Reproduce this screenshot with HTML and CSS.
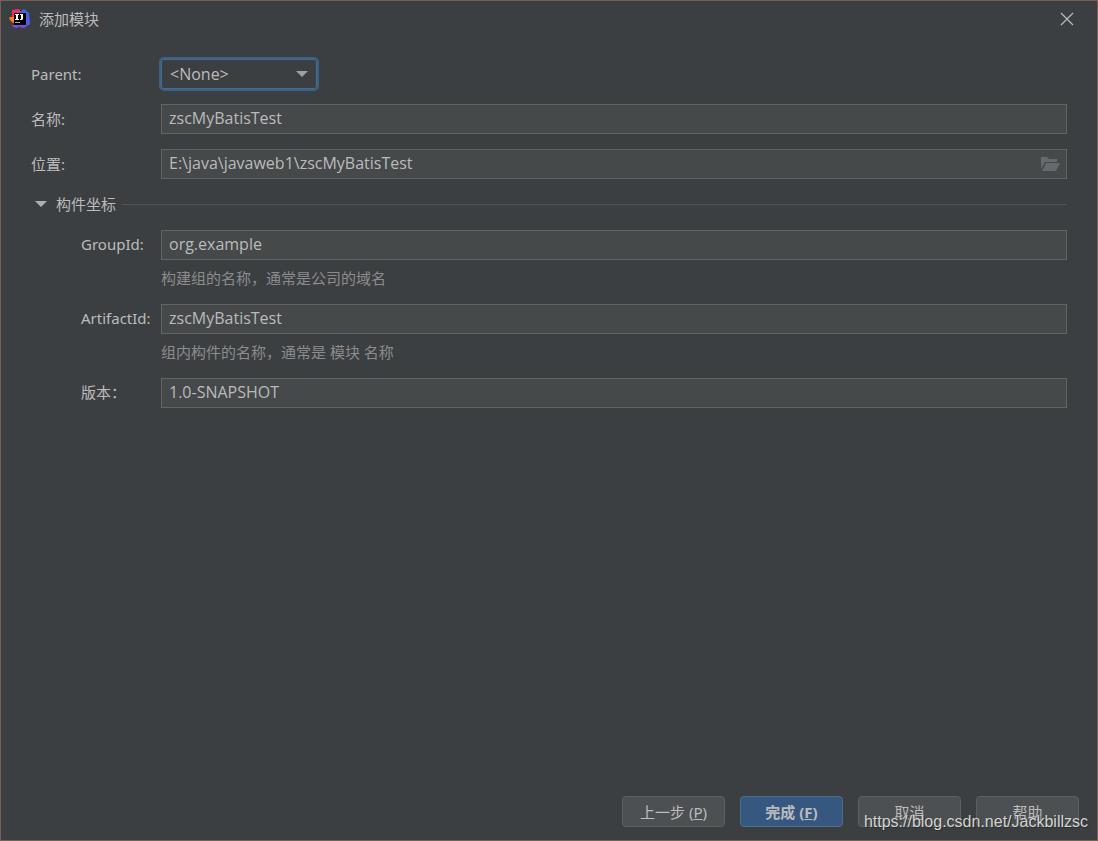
FILE: index.html
```html
<!DOCTYPE html>
<html lang="zh-CN">
<head>
<meta charset="utf-8">
<meta name="viewport" content="width=device-width, initial-scale=1">
<title>添加模块</title>
<link rel="stylesheet" href="styles.css">
</head>
<body>
<div class="dialog">
  <header class="titlebar">
    <svg class="logo" width="22" height="22" viewBox="0 0 22 22" aria-hidden="true">
      <defs>
        <linearGradient id="warm" x1="0" y1="1" x2="1" y2="0">
          <stop offset="0" stop-color="#fc801d"/>
          <stop offset=".4" stop-color="#fe2857"/>
          <stop offset="1" stop-color="#c93a9b"/>
        </linearGradient>
        <linearGradient id="cool" x1="0" y1="1" x2="1" y2="0">
          <stop offset="0" stop-color="#8a45e0"/>
          <stop offset="1" stop-color="#2b6bf0"/>
        </linearGradient>
      </defs>
      <path fill="url(#cool)" d="M11 4 15 1 20 5 21 16 15 20 6 18z"/>
      <path fill="url(#warm)" d="M3 2 10 1 13 6 6 15 4 15 0 11 3 9z"/>
      <path fill="#fc801d" d="M0 9h5v5H3z"/>
      <path fill="#8448dc" d="M3 17h8l-3 3-4-1z"/>
      <path fill="#000" d="M5 5h12v12H5z"/>
      <path fill="#fff" d="M6 6h4v1H9v4h1v1H6v-1h1V7H6zM11 6h3v5l-1 1h-2v-1h1V7h-1z"/>
      <path fill="#aaa" d="M6 14h5v1H6z"/>
    </svg>
    <h1 class="title">添加模块</h1>
    <button class="close" type="button" aria-label="关闭">
      <svg width="14" height="14" viewBox="0 0 14 14"><path d="M1 1 13 13M13 1 1 13" fill="none" stroke="#bbb" stroke-width="1.2"/></svg>
    </button>
  </header>

  <form class="form">
    <div class="row">
      <label class="label" for="parent">Parent:</label>
      <div class="combo">
        <select class="select" id="parent"><option>&lt;None&gt;</option></select>
        <svg class="arrow" width="12" height="6" viewBox="0 0 12 6"><path d="M0 0h12L6 6z" fill="#9da0a2"/></svg>
      </div>
    </div>
    <div class="row">
      <label class="label" for="name">名称:</label>
      <input class="field" id="name" type="text" value="zscMyBatisTest">
    </div>
    <div class="row">
      <label class="label" for="location">位置:</label>
      <div class="field field-browse">
        <input class="bare" id="location" type="text" value="E:\java\javaweb1\zscMyBatisTest">
        <button class="browse" type="button" aria-label="浏览">
          <svg width="19" height="14" viewBox="0 0 19 14" fill="#646a6d"><path d="M0 0h6l2 2h8v3H4L0 12z"/><path d="M5 6h14l-4 8H1z"/></svg>
        </button>
      </div>
    </div>

    <button class="section" type="button" aria-expanded="true">
      <svg width="12" height="6" viewBox="0 0 12 6"><path d="M0 0h12L6 6z" fill="#adafb0"/></svg>
      <span>构件坐标</span>
      <span class="rule"></span>
    </button>

    <div class="row nested">
      <label class="label" for="group">GroupId:</label>
      <input class="field" id="group" type="text" value="org.example">
    </div>
    <p class="hint">构建组的名称，通常是公司的域名</p>
    <div class="row nested">
      <label class="label" for="artifact">ArtifactId:</label>
      <input class="field" id="artifact" type="text" value="zscMyBatisTest">
    </div>
    <p class="hint">组内构件的名称，通常是 模块 名称</p>
    <div class="row nested">
      <label class="label" for="version">版本：</label>
      <input class="field" id="version" type="text" value="1.0-SNAPSHOT">
    </div>
  </form>

  <footer class="actions">
    <button class="button" type="button">上一步 (<u>P</u>)</button>
    <button class="button primary" type="button">完成 (<u>F</u>)</button>
    <button class="button" type="button">取消</button>
    <button class="button" type="button">帮助</button>
  </footer>
  <div class="watermark">https://blog.csdn.net/Jackbillzsc</div>
</div>
</body>
</html>
```
FILE: styles.css
```css
* {
  box-sizing: border-box;
}

body {
  margin: 0;
  background: #3c3f41;
  color: #bbbbbb;
  font: 15px/20px "Noto Sans", "Noto Sans CJK SC", sans-serif;
}

button,
input,
select {
  margin: 0;
  padding: 0;
  border: 0;
  background: none;
  color: inherit;
  font: inherit;
}

input,
select {
  font: 16px/20px "Open Sans", "Noto Sans CJK SC", sans-serif;
}

svg {
  display: block;
}

.dialog {
  position: relative;
  display: flex;
  flex-direction: column;
  min-height: 100vh;
  border: 1px solid #7b5e54;
}

.titlebar {
  display: flex;
  align-items: center;
  gap: 8px;
  height: 36px;
  padding: 0 22px 0 8px;
}

.title {
  flex: 1;
  margin: 0;
  font-size: 15px;
  font-weight: 400;
}

.close {
  padding: 1px;
}

.form {
  flex: 1;
  padding: 22px 30px 0;
}

.row {
  display: flex;
  align-items: center;
  height: 30px;
  margin-bottom: 15px;
}

.label {
  flex: none;
  width: 130px;
  white-space: nowrap;
}

.nested {
  margin-bottom: 8px;
  padding-left: 50px;
}

.nested .label {
  width: 80px;
  padding-bottom: 2px;
}

.field {
  flex: 1;
  min-width: 0;
  height: 30px;
  padding: 0 7px 2px;
  border: 1px solid #646464;
  background: #45494a;
}

.field-browse {
  display: flex;
  align-items: center;
  padding: 0 6px 0 7px;
}

.bare {
  flex: 1;
  min-width: 0;
  padding-bottom: 2px;
  outline: 0;
}

.combo {
  display: grid;
  align-items: center;
  width: 156px;
  height: 30px;
}

.select {
  grid-area: 1 / 1;
  height: 30px;
  padding-left: 8px;
  border: 1px solid #466d94;
  border-radius: 3px;
  outline: 2px solid #3d6185;
  outline-offset: 0;
  appearance: none;
}

.arrow {
  grid-area: 1 / 1;
  justify-self: end;
  margin-right: 9px;
  pointer-events: none;
}

.section {
  display: flex;
  align-items: center;
  gap: 9px;
  width: 100%;
  height: 20px;
  margin-bottom: 16px;
  padding-left: 4px;
}

.rule {
  flex: 1;
  height: 1px;
  margin-left: -3px;
  background: #515456;
}

.hint {
  margin: 0 0 16px 130px;
  color: #8c8c8c;
}

.actions {
  display: flex;
  justify-content: flex-end;
  gap: 15px;
  padding: 0 18px 13px;
}

.button {
  width: 103px;
  height: 31px;
  border: 1px solid #5e6060;
  border-radius: 4px;
  background: #4c5052;
}

.primary {
  border-color: #4c708c;
  background: #365880;
  font-weight: 700;
}

.watermark {
  position: absolute;
  right: 9px;
  bottom: 8px;
  color: #d2d3d3;
  font: 16px/20px "Liberation Sans", Arial, sans-serif;
  text-shadow: 1px 1px 1px #2b2d2e;
  pointer-events: none;
}
```
